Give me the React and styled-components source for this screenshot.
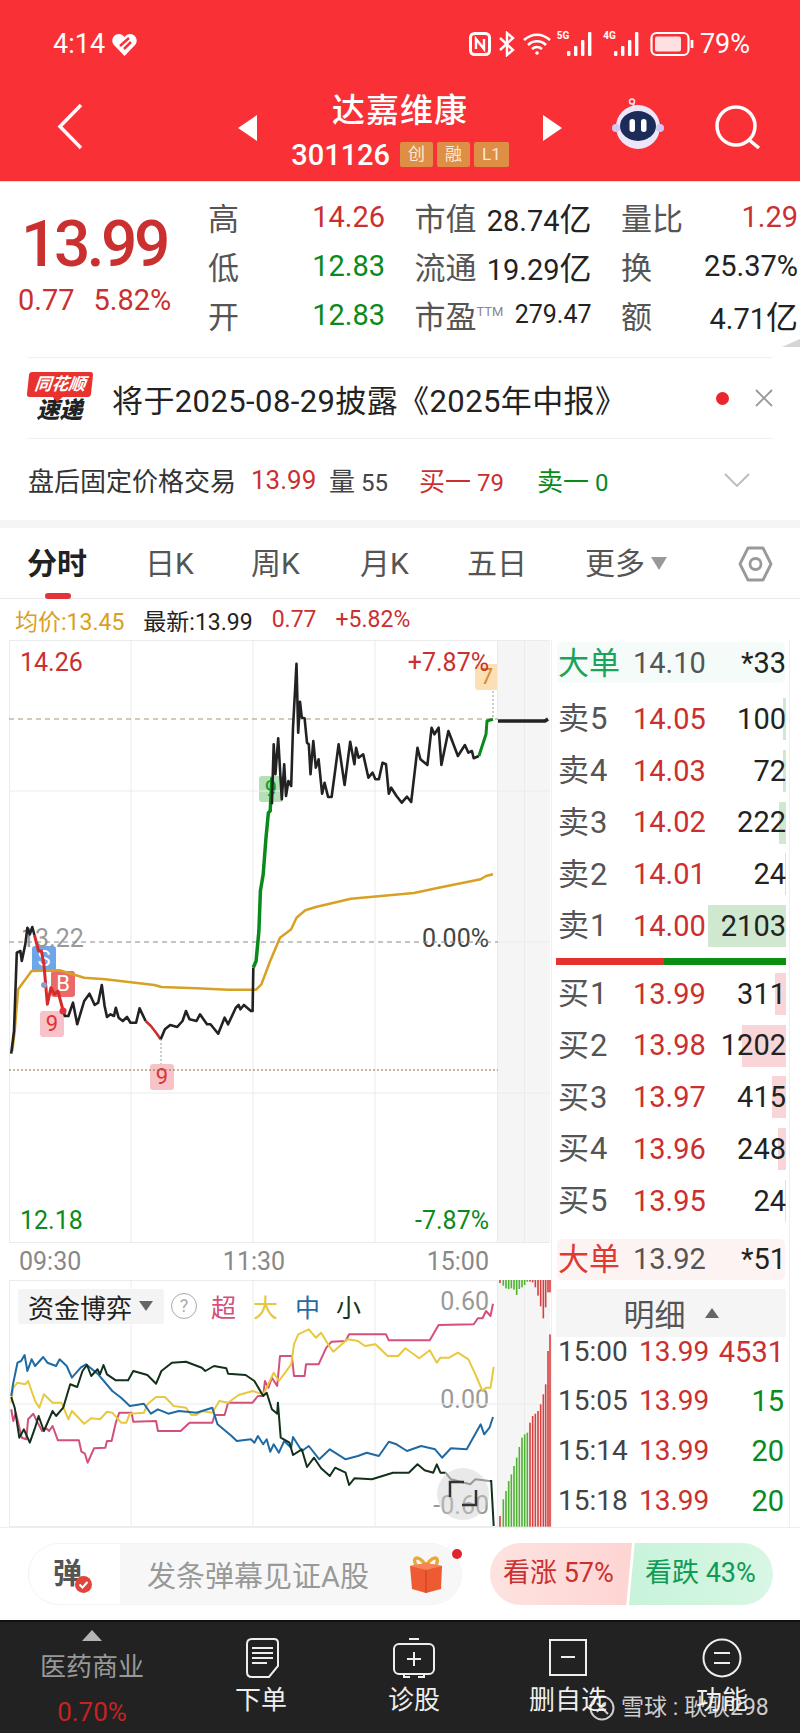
import React from "react"
import styled, { createGlobalStyle } from "styled-components"

const RED = "#c9302f"
const GREEN = "#0a8a1a"
const GRID = "#ebebeb"

const GlobalStyle = createGlobalStyle`
  html, body {
    margin: 0;
    padding: 0;
    background: #fff;
  }
  body {
    font-family: Roboto, "Noto Sans CJK SC", sans-serif;
    color: #222;
  }
  * {
    box-sizing: border-box;
  }
`

const Page = styled.div`
  position: relative;
  width: 800px;
  height: 1733px;
  overflow: hidden;
  background: #fff;
`

/* header */
const Header = styled.header`
  height: 182px;
  background: #f93036;
  color: #fff;
  border-bottom: 1px solid #e9dede;
`
const StatusBar = styled.div`
  height: 88px;
  display: flex;
  align-items: center;
  padding: 0 50px 0 53px;
  font-size: 27px;
`
const StatusTime = styled.span`
  width: 59px;
`
const StatusRight = styled.div`
  margin-left: auto;
  display: flex;
  align-items: center;
  gap: 6px;
`
const NetLabel = styled.span`
  font-size: 10px;
  font-weight: 700;
  align-self: flex-start;
  margin-right: -8px;
  margin-top: 2px;
`
const NavBar = styled.div`
  display: flex;
  align-items: flex-start;
  height: 93px;
  padding-left: 57px;
`
const BackIcon = styled.svg`
  margin-top: 15px;
  width: 26px;
  height: 47px;
`
const StockSwitch = styled.div`
  margin-left: 155px;
  width: 324px;
  display: flex;
  align-items: center;
  justify-content: space-between;
  height: 80px;
`
const StockTitle = styled.div`
  display: flex;
  flex-direction: column;
  align-items: center;
`
const StockName = styled.div`
  font-size: 33px;
  font-weight: 500;
  line-height: 44px;
  letter-spacing: 1px;
`
const StockCode = styled.div`
  display: flex;
  align-items: center;
  gap: 4px;
  line-height: 26px;
  margin-top: 9px;
`
const CodeText = styled.span`
  font-size: 29px;
  font-weight: 500;
  margin-right: 6px;
`
const CodeBadge = styled.span`
  height: 25px;
  padding: 0 ${(p) => p.$pad || 8}px;
  background: #de8e45;
  color: #fbead6;
  font-size: 17px;
  line-height: 25px;
  border-radius: 2px;
`
const RobotIcon = styled.svg`
  margin-left: 49px;
  margin-top: 10px;
  width: 54px;
  height: 52px;
`
const SearchIcon = styled.svg`
  margin-left: 50px;
  margin-top: 17px;
  width: 46px;
  height: 44px;
`

/* quote block */
const Quote = styled.section`
  position: relative;
  height: 175px;
  display: flex;
  padding-top: 10px;
  &::after {
    content: "";
    position: absolute;
    right: 0;
    bottom: 10px;
    border-style: solid;
    border-width: 0 0 8px 18px;
    border-color: transparent transparent #d5d5d5 transparent;
  }
`
const PriceColumn = styled.div`
  width: 208px;
  padding: 8px 0 0 18px;
`
const BigPrice = styled.div`
  margin-left: 3px;
  font-size: 64px;
  font-weight: 500;
  line-height: 90px;
  letter-spacing: -3.5px;
  color: ${RED};
`
const PriceChange = styled.div`
  font-size: 29px;
  line-height: 20px;
  color: ${RED};
  display: flex;
  gap: 19px;
`
const StatsGrid = styled.div`
  display: grid;
  grid-template-columns: repeat(3, 177px);
  grid-auto-rows: 49px;
  column-gap: 29.5px;
`
const StatCell = styled.div`
  display: flex;
  align-items: center;
  justify-content: space-between;
  white-space: nowrap;
`
const StatLabel = styled.span`
  font-size: 31px;
  color: #555;
  sup {
    font-size: 13px;
    color: #888;
    vertical-align: 12px;
    line-height: 0;
  }
`
const StatValue = styled.span`
  font-size: ${(p) => p.$size || 29}px;
  color: ${(p) => p.$color || "#222"};
  small {
    font-size: 32px;
  }
`

/* notice and after-hours rows */
const Notice = styled.div`
  height: 82px;
  margin: 0 27px;
  display: flex;
  align-items: center;
  border-top: 1px solid #f1f1f1;
  border-bottom: 1px solid #f1f1f1;
`
const NewsLogo = styled.div`
  width: 65px;
  display: flex;
  flex-direction: column;
  align-items: center;
  margin-right: 20px;
`
const NewsLogoTop = styled.div`
  position: relative;
  width: 64px;
  height: 25px;
  background: #e8322f;
  color: #fff;
  border-radius: 3px;
  transform: skewX(-6deg);
  font-size: 17px;
  line-height: 25px;
  font-weight: 700;
  font-style: italic;
  text-align: center;
  white-space: nowrap;
  &::after {
    content: "";
    position: absolute;
    left: 26px;
    bottom: -5px;
    border-style: solid;
    border-width: 5px 5px 0 5px;
    border-color: #e8322f transparent transparent transparent;
  }
`
const NewsLogoBottom = styled.div`
  font-size: 23px;
  line-height: 27px;
  font-weight: 900;
  font-style: italic;
  color: #222;
`
const NoticeText = styled.div`
  font-size: 31px;
  letter-spacing: 0.4px;
  color: #222;
  white-space: nowrap;
`
const NoticeDot = styled.span`
  margin-left: auto;
  width: 13px;
  height: 13px;
  border-radius: 50%;
  background: #e8262c;
`
const CloseIcon = styled.svg`
  margin-left: 26px;
  width: 18px;
  height: 18px;
`
const AfterHours = styled.div`
  height: 81px;
  padding-left: 28px;
  display: grid;
  grid-template-columns: 223px 78px 90px 118px 100px 1fr;
  align-items: center;
  white-space: nowrap;
`
const AfterCell = styled.span`
  font-size: ${(p) => p.$size || 24}px;
  color: ${(p) => p.$color || "#444"};
  b {
    font-weight: 400;
    font-size: 26px;
  }
`
const ChevronDown = styled.svg`
  justify-self: end;
  margin-right: 50px;
  width: 26px;
  height: 14px;
`
const Band = styled.div`
  height: 8px;
  background: #f5f5f5;
`

/* period tabs */
const Tabs = styled.nav`
  height: 71px;
  padding: 0 27px 0 27px;
  display: grid;
  grid-template-columns: 118px 106px 109px 107px 118px 1fr 35px;
  align-items: center;
  border-bottom: 1px solid #e9e9e9;
`
const Tab = styled.div`
  position: relative;
  display: flex;
  align-items: center;
  gap: 6px;
  font-size: 30px;
  font-weight: ${(p) => (p.$active ? 700 : 400)};
  color: ${(p) => (p.$active ? "#222" : "#555")};
  line-height: 71px;
  height: 71px;
`
const TabMark = styled.span`
  position: absolute;
  left: 18px;
  bottom: 0;
  width: 26px;
  height: 6px;
  border-radius: 3px;
  background: #e0333a;
`
const MoreArrow = styled.span`
  border-style: solid;
  border-width: 13px 8px 0 8px;
  border-color: #999 transparent transparent transparent;
`
const InfoRow = styled.div`
  height: 41px;
  padding-left: 15px;
  display: flex;
  align-items: center;
  gap: 19px;
  font-size: 23px;
`
const InfoItem = styled.span`
  color: ${(p) => p.$color || "#222"};
`

/* charts and order book */
const ChartRow = styled.div`
  display: flex;
  padding-left: 9px;
`
const ChartColumn = styled.div`
  width: 542px;
`
const ChartFrame = styled.div`
  position: relative;
  height: ${(p) => p.$height}px;
  svg {
    position: relative;
    z-index: 1;
    display: block;
  }
`
const ChartLabel = styled.span`
  position: absolute;
  z-index: 0;
  left: ${(p) => (p.$x === undefined ? "auto" : `${p.$x}px`)};
  right: ${(p) => (p.$right === undefined ? "auto" : `${p.$right}px`)};
  top: ${(p) => p.$y}px;
  font-size: 25px;
  line-height: 30px;
  color: ${(p) => p.$color || "#999"};
  white-space: nowrap;
`
const SignalTag = styled.span`
  position: absolute;
  z-index: 0;
  left: ${(p) => p.$x}px;
  top: ${(p) => p.$y}px;
  width: 24px;
  height: 26px;
  border-radius: 3px;
  background: ${(p) => p.$bg};
  color: ${(p) => p.$color};
  font-size: 22px;
  line-height: 26px;
  text-align: center;
`
const TimeAxis = styled.div`
  height: 37px;
  padding: 0 62px 0 10px;
  display: flex;
  align-items: center;
  justify-content: space-between;
  font-size: 25px;
  color: #888;
`
const IndicatorBar = styled.div`
  position: absolute;
  z-index: 2;
  left: 9px;
  top: 8px;
  display: flex;
  align-items: center;
`
const IndicatorSelect = styled.div`
  width: 146px;
  height: 35px;
  padding-left: 10px;
  display: flex;
  align-items: center;
  gap: 7px;
  background: #f4f4f4;
  border-radius: 3px;
  font-size: 26px;
  color: #222;
  white-space: nowrap;
`
const SelectArrow = styled.span`
  border-style: solid;
  border-width: 10px 7px 0 7px;
  border-color: #666 transparent transparent transparent;
`
const HelpMark = styled.span`
  margin-left: 7px;
  width: 26px;
  height: 26px;
  border: 1.5px solid #aaa;
  border-radius: 50%;
  color: #aaa;
  font-size: 18px;
  line-height: 23px;
  text-align: center;
`
const Legend = styled.span`
  margin-left: ${(p) => p.$gap}px;
  font-size: 25px;
  color: ${(p) => p.$color};
`
const Book = styled.aside`
  width: 239px;
  height: 887px;
  border-left: 1px solid #efefef;
  border-right: 1px solid #efefef;
  display: flex;
  flex-direction: column;
`
const BigOrder = styled.div`
  height: 41px;
  margin: ${(p) => p.$margin};
  padding-left: 1px;
  display: flex;
  align-items: center;
  background: ${(p) => p.$bg};
  border-radius: 5px;
  white-space: nowrap;
`
const BigOrderLabel = styled.span`
  width: 75px;
  margin-top: -5px;
  font-size: 31px;
  color: ${(p) => p.$color};
`
const BigOrderPrice = styled.span`
  font-size: 29px;
  color: #555;
`
const BigOrderQty = styled.span`
  margin-left: auto;
  font-size: 29px;
  margin-right: -1px;
`
const BookRow = styled.div`
  position: relative;
  height: 51.75px;
  padding: 0 3px 0 6px;
  display: flex;
  align-items: center;
  white-space: nowrap;
`
const BookLabel = styled.span`
  position: relative;
  width: 75px;
  margin-top: -6px;
  font-size: 31px;
  letter-spacing: 1px;
  color: #555;
`
const BookPrice = styled.span`
  position: relative;
  font-size: 29px;
  color: ${RED};
`
const BookQty = styled.span`
  position: relative;
  margin-left: auto;
  font-size: 29px;
  color: #222;
`
const DepthBar = styled.span`
  position: absolute;
  right: 3px;
  top: 5px;
  height: 42px;
  width: ${(p) => p.$width}px;
  background: ${(p) => p.$color};
`
const SplitBar = styled.div`
  height: 7px;
  margin: 6px 3px 3px 4px;
  background: linear-gradient(to right, #e5322f 47%, #0a8f12 47%);
`
const DetailHeader = styled.div`
  height: 48px;
  margin: 9px 3px 0 4px;
  display: flex;
  align-items: center;
  justify-content: center;
  gap: 19px;
  padding-left: 0;
  background: #f5f5f5;
  font-size: 31px;
  color: #555;
`
const DetailArrow = styled.span`
  border-style: solid;
  border-width: 0 7px 10px 7px;
  border-color: transparent transparent #666 transparent;
`
const TickList = styled.div`
  display: flex;
  flex-direction: column;
  gap: 21.8px;
  padding-top: 1px;
`
const TickRow = styled.div`
  height: 28px;
  padding: 0 5px 0 6px;
  display: grid;
  grid-template-columns: 81px 72px 1fr;
  align-items: center;
  font-size: 28px;
  line-height: 28px;
  white-space: nowrap;
`
const TickTime = styled.span`
  color: #444;
`
const TickPrice = styled.span`
  color: ${RED};
`
const TickQty = styled.span`
  text-align: right;
  font-size: 29px;
  color: ${(p) => p.$color};
`

/* comment box and vote */
const ActionRow = styled.div`
  height: 93px;
  padding-left: 28px;
  display: flex;
  align-items: center;
  border-top: 1px solid #eee;
`
const CommentBox = styled.div`
  position: relative;
  width: 434px;
  height: 62px;
  display: flex;
  border: 1px solid #f3f3f3;
  border-radius: 31px;
`
const CommentMark = styled.div`
  position: relative;
  width: 91px;
  padding-left: 24px;
  font-size: 29px;
  font-weight: 700;
  line-height: 60px;
  color: #555;
`
const CommentCheck = styled.svg`
  position: absolute;
  left: 46px;
  top: 32px;
  width: 17px;
  height: 17px;
`
const CommentInput = styled.div`
  flex: 1;
  display: flex;
  align-items: center;
  padding: 0 16px 0 27px;
  background: #f7f7f7;
  border-radius: 0 31px 31px 0;
  font-size: 29px;
  color: #999;
  white-space: nowrap;
`
const GiftIcon = styled.svg`
  margin-left: auto;
  width: 38px;
  height: 38px;
`
const CommentDot = styled.span`
  position: absolute;
  right: -1px;
  top: 5px;
  width: 10px;
  height: 10px;
  border-radius: 50%;
  background: #e0242c;
`
const Vote = styled.div`
  margin-left: 28px;
  width: 283px;
  height: 62px;
  display: flex;
  font-size: 27px;
  white-space: nowrap;
`
const VoteUp = styled.div`
  width: 142px;
  padding-left: 13px;
  line-height: 60px;
  color: ${RED};
  background: linear-gradient(to right, #fde3e0, #fdd5d3);
  border-radius: 31px 0 0 31px;
  clip-path: polygon(0 0, 100% 0, 96% 100%, 0 100%);
`
const VoteDown = styled.div`
  width: 144px;
  margin-left: -3px;
  padding-left: 16px;
  line-height: 60px;
  color: #0f9a55;
  background: linear-gradient(to right, #c8f3da, #d8f7e4);
  border-radius: 0 31px 31px 0;
  clip-path: polygon(4% 0, 100% 0, 100% 100%, 0 100%);
`

/* bottom bar */
const BottomBar = styled.footer`
  position: relative;
  height: 114px;
  padding-left: 8px;
  display: grid;
  grid-template-columns: 168px 170px 136px 172px 136px;
  background: #222;
  border-top: 2px solid #111;
`
const SectorItem = styled.div`
  display: flex;
  flex-direction: column;
  align-items: center;
`
const SectorArrow = styled.span`
  margin-top: 8px;
  border-style: solid;
  border-width: 0 10px 11px 10px;
  border-color: transparent transparent #b5b5b5 transparent;
`
const SectorName = styled.span`
  margin-top: 11px;
  font-size: 26px;
  line-height: 30px;
  color: #999;
`
const SectorChange = styled.span`
  margin-top: 15px;
  font-size: 26px;
  line-height: 30px;
  color: #c62222;
`
const BarItem = styled.div`
  display: flex;
  flex-direction: column;
  align-items: center;
  padding-top: 16px;
  gap: 8px;
  font-size: 26px;
  line-height: 28px;
  color: #eee;
  white-space: nowrap;
  svg {
    display: block;
    width: 44px;
    height: 40px;
  }
`
const Watermark = styled.div`
  position: absolute;
  left: 589px;
  top: 71px;
  display: flex;
  align-items: center;
  gap: 6px;
  font-size: 23px;
  line-height: 30px;
  color: rgba(255, 255, 255, 0.78);
  white-space: nowrap;
  svg {
    width: 26px;
    height: 26px;
  }
`

// chart data, measured off the picture then mapped to page pixels
const mainPoint = ([x, y]) => `${(x / 2.85).toFixed(1)},${(630 + y / 3).toFixed(1)}`
const subPoint = ([x, y]) => `${(x / 2.85).toFixed(1)},${(1230 + y / 3).toFixed(1)}`
const line = (points, map) => points.map(map).join(" ")

const priceSegments = [
  ["#222", 2.6, [[32, 1268], [40, 1200], [48, 965], [58, 960], [62, 990], [72, 940], [78, 890], [85, 910], [92, 888], [98, 912]]],
  ["#d92a2a", 3, [[98, 912], [110, 960], [118, 960], [125, 1000], [135, 1120], [145, 1070], [155, 1090], [165, 1080], [180, 1140]]],
  ["#222", 2.6, [[180, 1140], [185, 1155], [195, 1155], [208, 1115], [220, 1180], [240, 1110], [255, 1088], [270, 1122], [280, 1115], [290, 1062], [298, 1125], [305, 1158], [315, 1150], [325, 1155], [330, 1130], [338, 1160], [350, 1170], [362, 1158], [372, 1175], [388, 1175], [398, 1132], [415, 1170]]],
  ["#c9302f", 2.6, [[415, 1170], [430, 1185], [445, 1205], [458, 1225]]],
  ["#222", 2.6, [[458, 1225], [470, 1195], [485, 1182], [505, 1188], [520, 1170], [530, 1140], [540, 1165], [560, 1170], [570, 1150], [590, 1180], [600, 1180], [622, 1208], [640, 1160], [650, 1180], [672, 1130], [680, 1122], [685, 1135], [695, 1122], [715, 1140], [720, 1140], [722, 1010]]],
  ["#0a8a1a", 3.5, [[722, 1010], [730, 990], [738, 900], [742, 780], [750, 730], [758, 620], [765, 545], [770, 540], [775, 440]]],
  ["#222", 2.6, [[775, 520], [780, 340], [785, 430], [793, 322], [803, 505], [810, 400], [815, 495], [822, 450], [830, 465], [835, 290], [845, 98], [850, 305], [855, 212], [860, 260], [868, 262], [875, 335], [880, 340], [885, 430], [893, 330], [900, 410], [908, 385], [918, 488], [925, 455], [935, 498], [945, 498], [955, 420], [965, 340], [982, 462], [998, 332], [1010, 400], [1015, 350], [1022, 380], [1035, 370], [1050, 440], [1062, 425], [1070, 445], [1080, 445], [1090, 395], [1100, 400], [1108, 488], [1115, 470], [1130, 495], [1145, 515], [1160, 497], [1172, 513], [1190, 350], [1198, 385], [1218, 402], [1230, 290], [1238, 310], [1250, 290], [1258, 402], [1278, 300], [1305, 375], [1325, 342], [1335, 365], [1345, 360], [1350, 382], [1365, 375]]],
  ["#0a8a1a", 3, [[1365, 375], [1385, 310], [1388, 270], [1405, 265]]],
]
const averageLine = [[35, 1260], [42, 1200], [52, 1075], [90, 1020], [170, 1018], [240, 1040], [300, 1045], [440, 1062], [460, 1068], [560, 1072], [650, 1076], [730, 1076], [745, 1060], [770, 990], [798, 920], [830, 895], [845, 860], [870, 838], [900, 828], [1000, 803], [1180, 786], [1250, 770], [1370, 745], [1385, 735], [1405, 730]]

const fundLines = [
  ["#d4507a", [[32, 535], [38, 570], [45, 545], [62, 620], [75, 625], [80, 565], [95, 548], [105, 570], [120, 600], [130, 590], [140, 600], [150, 585], [165, 628], [225, 628], [232, 662], [242, 668], [250, 695], [268, 652], [300, 650], [305, 630], [318, 630], [330, 575], [340, 545], [375, 545], [380, 572], [445, 570], [450, 600], [515, 600], [540, 575], [605, 575], [612, 552], [640, 552], [650, 515], [720, 515], [735, 495], [750, 495], [755, 450], [765, 470], [775, 440], [790, 465], [798, 375], [832, 375], [838, 435], [868, 435], [872, 400], [908, 400], [930, 350], [945, 332], [985, 330], [995, 310], [1100, 310], [1108, 328], [1225, 328], [1250, 282], [1350, 280], [1362, 262], [1375, 262], [1385, 240], [1398, 255], [1405, 218]]],
  ["#e8c83f", [[32, 515], [38, 470], [50, 455], [72, 460], [80, 450], [100, 510], [112, 530], [125, 490], [150, 515], [175, 515], [185, 540], [195, 565], [205, 540], [240, 578], [260, 562], [285, 565], [305, 542], [320, 545], [345, 575], [360, 575], [370, 548], [410, 545], [420, 520], [445, 498], [470, 498], [495, 525], [530, 530], [545, 552], [560, 552], [575, 540], [605, 545], [625, 510], [650, 515], [680, 492], [720, 480], [750, 490], [760, 470], [780, 425], [795, 450], [830, 400], [838, 340], [850, 310], [880, 295], [900, 320], [915, 305], [935, 340], [950, 362], [990, 325], [1020, 330], [1040, 345], [1070, 340], [1105, 375], [1135, 375], [1155, 352], [1195, 382], [1225, 358], [1245, 395], [1255, 380], [1280, 380], [1305, 365], [1335, 385], [1355, 430], [1375, 480], [1385, 470], [1398, 470], [1407, 408]]],
  ["#1e6aa5", [[32, 495], [38, 455], [50, 395], [60, 390], [70, 372], [78, 420], [90, 385], [100, 405], [123, 378], [135, 395], [160, 405], [170, 385], [190, 405], [205, 440], [230, 410], [245, 400], [280, 430], [320, 480], [345, 500], [370, 525], [410, 518], [430, 548], [450, 535], [480, 548], [510, 540], [560, 545], [605, 530], [620, 580], [660, 615], [675, 630], [715, 625], [725, 635], [735, 615], [750, 640], [760, 625], [770, 662], [780, 640], [795, 665], [810, 630], [830, 650], [835, 618], [860, 660], [880, 645], [910, 685], [940, 655], [985, 685], [1020, 675], [1045, 665], [1080, 675], [1108, 632], [1130, 640], [1160, 660], [1200, 645], [1240, 655], [1260, 680], [1285, 652], [1330, 655], [1370, 580], [1380, 610], [1395, 590], [1405, 558]]],
  ["#12301a", [[32, 498], [42, 530], [55, 620], [68, 595], [85, 635], [100, 590], [110, 555], [125, 600], [150, 540], [160, 555], [180, 530], [200, 460], [220, 468], [235, 420], [248, 402], [260, 435], [278, 415], [285, 430], [295, 402], [305, 430], [330, 448], [365, 448], [380, 420], [420, 432], [445, 458], [460, 420], [490, 395], [530, 392], [575, 410], [585, 420], [610, 405], [645, 412], [650, 428], [700, 432], [725, 450], [750, 495], [760, 485], [775, 535], [790, 548], [792, 515], [800, 620], [825, 635], [835, 672], [860, 655], [875, 708], [895, 680], [915, 712], [940, 735], [955, 710], [985, 725], [995, 762], [1010, 742], [1060, 745], [1120, 725], [1165, 725], [1190, 700], [1210, 718], [1235, 725], [1245, 700], [1255, 725], [1270, 725]]],
]
// the tail of the small-order line, greyed out by the floating button above it
const fundTail = [[1270, 725], [1285, 745], [1340, 760], [1355, 745], [1395, 750]]
const fundDrop = [[1395, 750], [1400, 750], [1407, 885]]

// [x, top of bar] for the rising bars, [x, length] for the hanging ones
const risingBars = [[60, 765, "r"], [70, 715, "g"], [78, 690, "g"], [86, 660, "g"], [94, 640, "g"], [102, 615, "g"], [110, 590, "g"], [118, 558, "g"], [126, 530, "g"], [134, 520, "g"], [142, 515, "g"], [150, 485, "r"], [158, 465, "r"], [166, 458, "r"], [174, 450, "r"], [182, 430, "r"], [190, 400, "r"], [197, 370, "r"], [204, 270, "r"], [210, 220, "r"]]
const hangingBars = [[60, 12, "r"], [70, 20, "g"], [78, 28, "g"], [86, 30, "g"], [94, 28, "g"], [102, 32, "g"], [110, 48, "g"], [118, 30, "g"], [126, 25, "g"], [134, 18, "g"], [142, 8, "g"], [150, 8, "r"], [158, 10, "r"], [166, 25, "r"], [174, 50, "r"], [182, 82, "r"], [190, 118, "r"], [197, 85, "r"], [204, 40, "r"], [210, 40, "r"]]
const barColor = { r: "#d8403f", g: "#4fb233" }

const asks = [
  ["卖5", "14.05", "100", 3],
  ["卖4", "14.03", "72", 3],
  ["卖3", "14.02", "222", 7],
  ["卖2", "14.01", "24", 1],
  ["卖1", "14.00", "2103", 78],
]
const bids = [
  ["买1", "13.99", "311", 11],
  ["买2", "13.98", "1202", 44],
  ["买3", "13.97", "415", 14],
  ["买4", "13.96", "248", 8],
  ["买5", "13.95", "24", 1],
]
const ticks = [
  ["15:00", "13.99", "4531", RED],
  ["15:05", "13.99", "15", GREEN],
  ["15:14", "13.99", "20", GREEN],
  ["15:18", "13.99", "20", GREEN],
]

const MainChart = () => (
  <ChartFrame $height={603}>
    <SignalTag $x={23} $y={306} $bg="#6ea6ea" $color="#fff">S</SignalTag>
    <SignalTag $x={42} $y={331} $bg="#ea6a6a" $color="#fff">B</SignalTag>
    <SignalTag $x={31} $y={371} $bg="#f7c3c8" $color="#d33">9</SignalTag>
    <SignalTag $x={141} $y={424} $bg="#f7c3c8" $color="#d33">9</SignalTag>
    <SignalTag $x={250} $y={136} $bg="#b5dfb5" $color="#1a9a2a">9</SignalTag>
    <SignalTag $x={466} $y={24} $bg="#fbdfb5" $color="#d98a2a">7</SignalTag>
    <ChartLabel $x={11} $y={8} $color={RED}>14.26</ChartLabel>
    <ChartLabel $right={62} $y={8} $color={RED}>+7.87%</ChartLabel>
    <ChartLabel $x={12} $y={284}>13.22</ChartLabel>
    <ChartLabel $right={62} $y={284} $color="#444">0.00%</ChartLabel>
    <ChartLabel $x={11} $y={566} $color={GREEN}>12.18</ChartLabel>
    <ChartLabel $right={62} $y={566} $color={GREEN}>-7.87%</ChartLabel>
    <svg width="542" height="603" viewBox="9 639 542 603" fill="none">
      <rect x="498" y="639" width="52" height="603" fill="#f5f5f5" />
      <g stroke={GRID} strokeWidth="1">
        <path d="M9.5 639V1242M131 639V1242M253 639V1242M375 639V1242M497.5 639V1242M524.5 639V1242" />
        <path d="M9 639.5H550M9 790H550M9 1092H550M9 1241.5H550M498 941H550" />
      </g>
      <path d="M9 718H498" stroke="#a8946a" strokeWidth="1.2" strokeDasharray="5 4" />
      <path d="M9 941H498" stroke="#8a8a8a" strokeWidth="1.2" strokeDasharray="5 4" />
      <path d="M9 1069H498" stroke="#8c6d3a" strokeWidth="1.2" strokeDasharray="2 2" />
      <path d="M161 1038V1063M493 690V718" stroke="#999" strokeWidth="1" strokeDasharray="2 2" />
      <polyline points={line(averageLine, mainPoint)} stroke="#d8a024" strokeWidth="2.5" strokeLinejoin="round" />
      {priceSegments.map(([color, width, points], i) => (
        <polyline key={i} points={line(points, mainPoint)} stroke={color} strokeWidth={width} strokeLinejoin="round" />
      ))}
      <circle cx="63" cy="1010" r="3.5" fill="#e0303a" />
      <circle cx="44" cy="984" r="3" fill="#8aa0c8" />
      <path d="M498 720H545L548 718" stroke="#222" strokeWidth="3.5" />
    </svg>
  </ChartFrame>
)

const FundChart = () => (
  <ChartFrame $height={247}>
    <IndicatorBar>
      <IndicatorSelect>
        资金博弈
        <SelectArrow />
      </IndicatorSelect>
      <HelpMark>?</HelpMark>
      <Legend $gap={14} $color="#d4507a">超</Legend>
      <Legend $gap={17} $color="#e8c53e">大</Legend>
      <Legend $gap={17} $color="#1e6aa5">中</Legend>
      <Legend $gap={16} $color="#16331c">小</Legend>
    </IndicatorBar>
    <ChartLabel $right={62} $y={7}>0.60</ChartLabel>
    <ChartLabel $right={62} $y={105}>0.00</ChartLabel>
    <ChartLabel $right={62} $y={211}>-0.60</ChartLabel>
    <svg width="542" height="247" viewBox="9 1279 542 247" fill="none">
      <rect x="498" y="1279" width="52" height="247" fill="#f5f5f5" />
      <g stroke={GRID} strokeWidth="1">
        <path d="M9.5 1279V1526M131 1279V1526M253 1279V1526M375 1279V1526M497.5 1279V1526M524.5 1279V1526" />
        <path d="M9 1279.5H550M9 1403H550M9 1525.5H550" />
      </g>
      {fundLines.map(([color, points]) => (
        <polyline key={color} points={line(points, subPoint)} stroke={color} strokeWidth="2" strokeLinejoin="round" />
      ))}
      <polyline points={line(fundDrop, subPoint)} stroke="#12301a" strokeWidth="2" />
      {risingBars.map(([x, top, c]) => (
        <rect key={x} x={480 + x / 3 - 0.8} y={1260 + top / 3} width="1.6" height={(797 - top) / 3} fill={barColor[c]} />
      ))}
      {hangingBars.map(([x, len, c]) => (
        <rect key={x} x={480 + x / 3 - 0.8} y={1278} width="1.6" height={len / 3} fill={barColor[c]} />
      ))}
      <circle cx="463" cy="1493" r="26" fill="#cfcfcf" fillOpacity="0.45" />
      <polyline points={line(fundTail, subPoint)} stroke="#999" strokeWidth="2" strokeLinejoin="round" />
      <path d="M450 1496V1481H464M476 1489V1504H462" stroke="#333" strokeWidth="2.5" />
    </svg>
  </ChartFrame>
)

const OrderBook = () => (
  <Book>
    <BigOrder $margin="2px 4px 10px 5px" $bg="#f5fbf8">
      <BigOrderLabel $color="#1aa35a">大单</BigOrderLabel>
      <BigOrderPrice>14.10</BigOrderPrice>
      <BigOrderQty>*33</BigOrderQty>
    </BigOrder>
    {asks.map(([label, price, qty, width]) => (
      <BookRow key={label}>
        <DepthBar $width={width} $color="#cfe8cf" />
        <BookLabel>{label}</BookLabel>
        <BookPrice>{price}</BookPrice>
        <BookQty>{qty}</BookQty>
      </BookRow>
    ))}
    <SplitBar />
    {bids.map(([label, price, qty, width]) => (
      <BookRow key={label}>
        <DepthBar $width={width} $color="#f9d5d7" />
        <BookLabel>{label}</BookLabel>
        <BookPrice>{price}</BookPrice>
        <BookQty>{qty}</BookQty>
      </BookRow>
    ))}
    <BigOrder $margin="12px 4px 0 5px" $bg="#fdf3f3">
      <BigOrderLabel $color="#e0392f">大单</BigOrderLabel>
      <BigOrderPrice>13.92</BigOrderPrice>
      <BigOrderQty>*51</BigOrderQty>
    </BigOrder>
    <DetailHeader>
      明细
      <DetailArrow />
    </DetailHeader>
    <TickList>
      {ticks.map(([time, price, qty, color]) => (
        <TickRow key={time}>
          <TickTime>{time}</TickTime>
          <TickPrice>{price}</TickPrice>
          <TickQty $color={color}>{qty}</TickQty>
        </TickRow>
      ))}
    </TickList>
  </Book>
)

const SignalBars = () => (
  <svg width="30" height="24" viewBox="0 0 30 24" fill="#fff">
    <rect x="0" y="19" width="3.4" height="5" rx="1" />
    <rect x="7" y="14" width="3.4" height="10" rx="1" />
    <rect x="14" y="8" width="3.4" height="16" rx="1" />
    <rect x="21" y="0" width="3.4" height="24" rx="1" />
  </svg>
)

const StatusIcons = () => (
  <StatusRight>
    <svg width="22" height="24" viewBox="0 0 22 24" fill="none" stroke="#fff" strokeWidth="3">
      <rect x="1.5" y="1.5" width="19" height="21" rx="4" />
      <path d="M7 17V7L15 17V7" strokeWidth="2.4" />
    </svg>
    <svg width="20" height="26" viewBox="0 0 20 26" fill="none" stroke="#fff" strokeWidth="2.4">
      <path d="M3 7L16 19L10 24V2L16 7L3 19" />
    </svg>
    <svg width="28" height="24" viewBox="0 0 28 24" fill="none" stroke="#fff" strokeWidth="2.6">
      <path d="M1 8C9 1 19 1 27 8M5 13C10 8 18 8 23 13M9 17C12 14.5 16 14.5 19 17" />
      <circle cx="14" cy="21" r="1.8" fill="#fff" stroke="none" />
    </svg>
    <NetLabel>5G</NetLabel>
    <SignalBars />
    <NetLabel>4G</NetLabel>
    <SignalBars />
    <svg width="44" height="26" viewBox="0 0 44 26" fill="none" stroke="#fff" strokeWidth="2.2">
      <rect x="1.5" y="2" width="37" height="22" rx="5" />
      <rect x="5" y="5.5" width="26" height="15" rx="2" fill="#fff" fillOpacity="0.85" stroke="none" />
      <path d="M42 9V17" strokeWidth="2.8" />
    </svg>
    <span>79%</span>
  </StatusRight>
)

const Robot = () => (
  <RobotIcon viewBox="0 0 54 52">
    <circle cx="21" cy="3.5" r="2.5" fill="none" stroke="#f3e6f5" strokeWidth="1.5" />
    <path d="M22 6L24 10" stroke="#f3e6f5" strokeWidth="2" />
    <circle cx="27" cy="29" r="22" fill="#ece6fa" />
    <circle cx="5" cy="30" r="4" fill="#cfc8f2" />
    <circle cx="49" cy="30" r="4" fill="#cfc8f2" />
    <ellipse cx="27" cy="28" rx="18" ry="15" fill="#1c2b58" />
    <rect x="18.5" y="21" width="5.5" height="13" rx="2.7" fill="#fff" />
    <rect x="30" y="21" width="5.5" height="13" rx="2.7" fill="#fff" />
  </RobotIcon>
)

const Gift = () => (
  <GiftIcon viewBox="0 0 38 38">
    <path d="M18 9C10 -1 5 3 9 10M20 9C28 -1 33 3 29 10" fill="none" stroke="#e8a93a" strokeWidth="3.5" />
    <path d="M3 11L19 8L35 11L34 34L19 38L5 34Z" fill="#ee5a32" />
    <path d="M3 11L19 15L35 11L19 8Z" fill="#f8825a" />
    <path d="M19 15V38" stroke="#d44a26" strokeWidth="1.5" />
  </GiftIcon>
)

const App = () => (
  <Page>
    <GlobalStyle />
    <Header>
      <StatusBar>
        <StatusTime>4:14</StatusTime>
        <svg width="25" height="23" viewBox="0 0 25 23" fill="#fff">
          <path d="M12.5 23L1.5 11.5C-1.5 7 1.5 1 7 1C9 1 11 2 12.5 4C14 2 16 1 18 1C23.5 1 26.5 7 23.5 11.5Z" />
          <path d="M8 13L17 5M12 16L19 9" stroke="#f93036" strokeWidth="2.5" />
        </svg>
        <StatusIcons />
      </StatusBar>
      <NavBar>
        <BackIcon viewBox="0 0 26 47" fill="none" stroke="#fff" strokeWidth="3.5">
          <path d="M24 2L3 23.5L24 45" />
        </BackIcon>
        <StockSwitch>
          <svg width="19" height="26" viewBox="0 0 19 26" fill="#fff">
            <path d="M19 0V26L0 13Z" />
          </svg>
          <StockTitle>
            <StockName>达嘉维康</StockName>
            <StockCode>
              <CodeText>301126</CodeText>
              <CodeBadge>创</CodeBadge>
              <CodeBadge>融</CodeBadge>
              <CodeBadge $pad={8}>L1</CodeBadge>
            </StockCode>
          </StockTitle>
          <svg width="19" height="26" viewBox="0 0 19 26" fill="#fff">
            <path d="M0 0V26L19 13Z" />
          </svg>
        </StockSwitch>
        <Robot />
        <SearchIcon viewBox="0 0 46 44" fill="none" stroke="#fff" strokeWidth="3.5">
          <circle cx="21" cy="21" r="19" />
          <path d="M33 34L44 43" />
        </SearchIcon>
      </NavBar>
    </Header>

    <Quote>
      <PriceColumn>
        <BigPrice>13.99</BigPrice>
        <PriceChange>
          <span>0.77</span>
          <span>5.82%</span>
        </PriceChange>
      </PriceColumn>
      <StatsGrid>
        <StatCell><StatLabel>高</StatLabel><StatValue $color={RED}>14.26</StatValue></StatCell>
        <StatCell><StatLabel>市值</StatLabel><StatValue>28.74<small>亿</small></StatValue></StatCell>
        <StatCell><StatLabel>量比</StatLabel><StatValue $color={RED}>1.29</StatValue></StatCell>
        <StatCell><StatLabel>低</StatLabel><StatValue $color={GREEN}>12.83</StatValue></StatCell>
        <StatCell><StatLabel>流通</StatLabel><StatValue>19.29<small>亿</small></StatValue></StatCell>
        <StatCell><StatLabel>换</StatLabel><StatValue>25.37%</StatValue></StatCell>
        <StatCell><StatLabel>开</StatLabel><StatValue $color={GREEN}>12.83</StatValue></StatCell>
        <StatCell><StatLabel>市盈<sup>TTM</sup></StatLabel><StatValue $size={25}>279.47</StatValue></StatCell>
        <StatCell><StatLabel>额</StatLabel><StatValue>4.71<small>亿</small></StatValue></StatCell>
      </StatsGrid>
    </Quote>

    <Notice>
      <NewsLogo>
        <NewsLogoTop>同花顺</NewsLogoTop>
        <NewsLogoBottom>速递</NewsLogoBottom>
      </NewsLogo>
      <NoticeText>将于2025-08-29披露《2025年中报》</NoticeText>
      <NoticeDot />
      <CloseIcon viewBox="0 0 18 18" stroke="#999" strokeWidth="1.8">
        <path d="M1 1L17 17M17 1L1 17" />
      </CloseIcon>
    </Notice>

    <AfterHours>
      <AfterCell $size={26} $color="#333">盘后固定价格交易</AfterCell>
      <AfterCell $size={26} $color={RED}>13.99</AfterCell>
      <AfterCell><b>量</b> 55</AfterCell>
      <AfterCell $color={RED}><b>买一</b> 79</AfterCell>
      <AfterCell $color={GREEN}><b>卖一</b> 0</AfterCell>
      <ChevronDown viewBox="0 0 26 14" fill="none" stroke="#bbb" strokeWidth="1.8">
        <path d="M1 1L13 13L25 1" />
      </ChevronDown>
    </AfterHours>
    <Band />

    <Tabs>
      <Tab $active>分时<TabMark /></Tab>
      <Tab>日K</Tab>
      <Tab>周K</Tab>
      <Tab>月K</Tab>
      <Tab>五日</Tab>
      <Tab>更多<MoreArrow /></Tab>
      <svg width="35" height="36" viewBox="0 0 35 36" fill="none" stroke="#999" strokeWidth="2.8">
        <path d="M10 2H25L33 18L25 34H10L2 18Z" strokeLinejoin="round" />
        <circle cx="17.5" cy="18" r="5.5" />
      </svg>
    </Tabs>

    <InfoRow>
      <InfoItem $color="#d8a024">均价:13.45</InfoItem>
      <InfoItem>最新:13.99</InfoItem>
      <InfoItem $color={RED}>0.77</InfoItem>
      <InfoItem $color={RED}>+5.82%</InfoItem>
    </InfoRow>

    <ChartRow>
      <ChartColumn>
        <MainChart />
        <TimeAxis>
          <span>09:30</span>
          <span>11:30</span>
          <span>15:00</span>
        </TimeAxis>
        <FundChart />
      </ChartColumn>
      <OrderBook />
    </ChartRow>

    <ActionRow>
      <CommentBox>
        <CommentMark>
          弹
          <CommentCheck viewBox="0 0 17 17">
            <circle cx="8.5" cy="8.5" r="8.5" fill="#e0443a" />
            <path d="M4.5 8.5L7.5 11.5L12.5 6" fill="none" stroke="#fff" strokeWidth="2" />
          </CommentCheck>
        </CommentMark>
        <CommentInput>
          发条弹幕见证A股
          <Gift />
        </CommentInput>
        <CommentDot />
      </CommentBox>
      <Vote>
        <VoteUp>看涨 57%</VoteUp>
        <VoteDown>看跌 43%</VoteDown>
      </Vote>
    </ActionRow>

    <BottomBar>
      <SectorItem>
        <SectorArrow />
        <SectorName>医药商业</SectorName>
        <SectorChange>0.70%</SectorChange>
      </SectorItem>
      <BarItem>
        <svg viewBox="0 0 44 40" fill="none" stroke="#eee" strokeWidth="2">
          <path d="M8 6Q8 1 13 1H35Q39 1 39 5V28L30 39H13Q8 39 8 34Z" />
          <path d="M13 10H34M13 15H34M13 20H34M13 25H28" />
        </svg>
        下单
      </BarItem>
      <BarItem>
        <svg viewBox="0 0 44 40" fill="none" stroke="#eee" strokeWidth="2">
          <path d="M17 1H27" />
          <rect x="2" y="6" width="40" height="30" rx="5" />
          <path d="M22 14V28M15 21H29" />
          <path d="M12 37V39H18M32 37V39H26" />
        </svg>
        诊股
      </BarItem>
      <BarItem>
        <svg viewBox="0 0 44 40" fill="none" stroke="#eee" strokeWidth="2">
          <rect x="4" y="2" width="36" height="35" />
          <path d="M15 19H29" />
        </svg>
        删自选
      </BarItem>
      <BarItem>
        <svg viewBox="0 0 44 40" fill="none" stroke="#eee" strokeWidth="2">
          <circle cx="22" cy="20" r="18.5" />
          <path d="M14 15H30M14 25H30" />
        </svg>
        功能
      </BarItem>
      <Watermark>
        <svg viewBox="0 0 26 26" fill="none" stroke="rgba(255,255,255,0.78)" strokeWidth="2">
          <circle cx="13" cy="13" r="11.5" />
          <path d="M8 8L19 19M15 8L8 17" />
        </svg>
        雪球 : 耿耿298
      </Watermark>
    </BottomBar>
  </Page>
)

export default App
